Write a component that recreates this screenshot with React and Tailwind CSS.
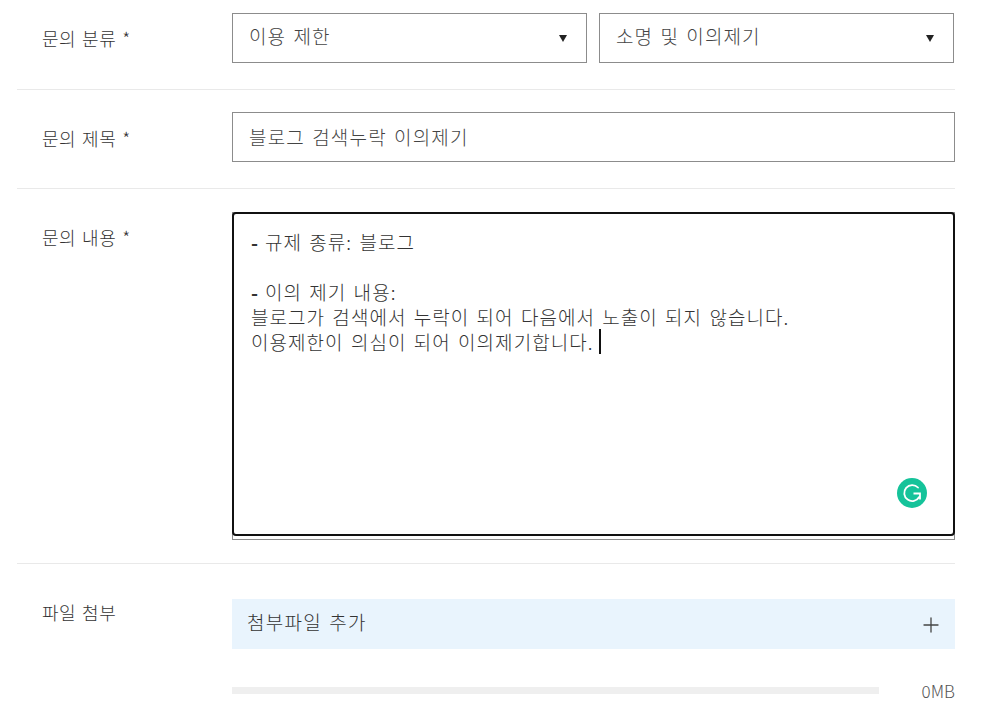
import React from "react";
import { Plus } from "lucide-react";

const font = { fontFamily: '"Noto Sans CJK KR", "Noto Sans", sans-serif' };

const Label = ({ children, required }) => (
  <div className="w-[215px] shrink-0 pl-[25px] text-[18px] leading-[24px] font-light tracking-[0.5px] text-[#333] [word-spacing:1.5px]">
    {children}
    {required && " *"}
  </div>
);

const SelectBox = ({ value }) => (
  <div className="flex h-[50px] w-[355px] items-center justify-between border border-[#8c8c8c] pl-4 pr-[19px]">
    <span className="pb-[3px] text-[19px] font-light tracking-[1.1px] text-[#444] [word-spacing:2px]">{value}</span>
    <span className="h-0 w-0 border-x-[4.5px] border-t-[7px] border-x-transparent border-t-[#222]" />
  </div>
);

const GrammarlyBadge = () => (
  <svg className="absolute right-[26px] bottom-[26px]" width="30" height="30" viewBox="0 0 30 30">
    <circle cx="15" cy="15" r="15" fill="#15c39a" />
    <path
      d="M21 9.5a8 8 0 1 0 1.2 9.5"
      fill="none"
      stroke="#fff"
      strokeWidth="1.8"
      strokeLinecap="round"
    />
    <path d="M16.5 15.5h6.5v6" fill="none" stroke="#fff" strokeWidth="1.8" />
  </svg>
);

const DashLine = ({ children }) => (
  <div className="flex">
    <span className="w-[14px] font-bold">-</span>
    <span>{children}</span>
  </div>
);

export default function App() {
  return (
    <div className="h-[711px] w-[988px] overflow-hidden bg-white" style={font}>
      <div className="ml-[17px] w-[938px]">
        <div className="flex border-b border-[#e9e9e9] pt-[13px] pb-[26px]">
          <div className="pt-[13px]">
            <Label required>문의 분류</Label>
          </div>
          <div className="flex gap-3">
            <SelectBox value="이용 제한" />
            <SelectBox value="소명 및 이의제기" />
          </div>
        </div>

        <div className="flex border-b border-[#e9e9e9] pt-[22px] pb-[26px]">
          <div className="pt-[14px]">
            <Label required>문의 제목</Label>
          </div>
          <div className="flex h-[50px] w-[723px] items-center border border-[#8c8c8c] pl-4">
            <span className="text-[19px] font-light tracking-[1.15px] text-[#444] [word-spacing:2px]">블로그 검색누락 이의제기</span>
          </div>
        </div>

        <div className="flex border-b border-[#e9e9e9] pt-[23px] pb-[23px]">
          <div className="pt-[13px]">
            <Label required>문의 내용</Label>
          </div>
          <div className="h-[328px] w-[723px] border border-[#8c8c8c]">
            <div className="relative -m-px h-[324px] rounded-[4px] border-2 border-[#111] bg-white pt-[15px] pl-[17px] text-[19px] leading-[25px] font-light tracking-[1.05px] text-[#333] [word-spacing:2px]">
              <DashLine>규제 종류: 블로그</DashLine>
              <div className="h-[25px]" />
              <DashLine>이의 제기 내용:</DashLine>
              <div>블로그가 검색에서 누락이 되어 다음에서 노출이 되지 않습니다.</div>
              <div className="flex items-center">
                이용제한이 의심이 되어 이의제기합니다.
                <span className="ml-[5px] inline-block h-[25px] w-[2px] bg-[#111]" />
              </div>
              <GrammarlyBadge />
            </div>
          </div>
        </div>

        <div className="flex pt-[35px]">
          <div className="pt-px">
            <Label>파일 첨부</Label>
          </div>
          <div className="w-[723px]">
            <div className="flex h-[50px] items-center justify-between bg-[#e9f4fd] pr-3 pl-[15px]">
              <span className="pb-1 text-[19px] font-light tracking-[1.25px] text-[#333] [word-spacing:2px]">첨부파일 추가</span>
              <Plus size={24} strokeWidth={1.3} className="mt-px text-[#444]" />
            </div>
            <div className="mt-[38px] flex items-center justify-between">
              <div className="h-[7px] w-[647px] bg-[#efefef]" />
              <span className="text-[17px] leading-[7px] font-light text-[#555]">0MB</span>
            </div>
          </div>
        </div>
      </div>
    </div>
  );
}
